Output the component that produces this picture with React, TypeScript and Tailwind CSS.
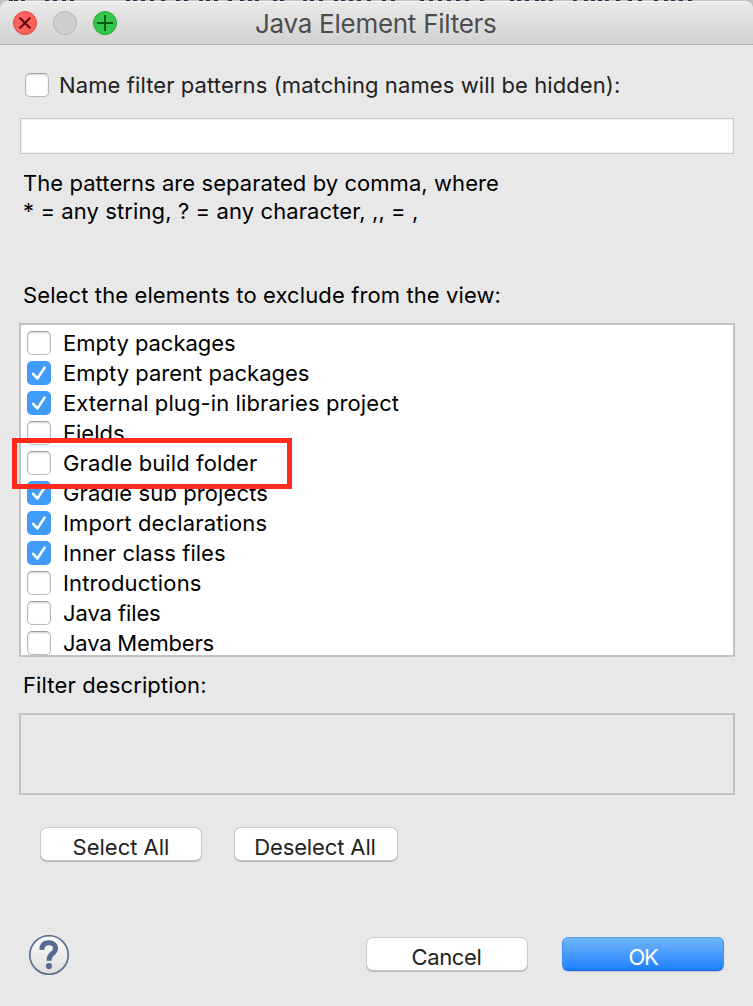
const strip = [9, 14, 21, 45, 53, 62, 70, 126, 133, 141, 150, 161, 176, 184, 199, 206, 214, 228, 240, 248, 255, 273, 280, 303, 310, 319, 334, 341, 349, 357, 367, 382, 391, 420, 429, 438, 447, 456, 465, 480, 510, 517, 525, 535, 541, 549, 573, 584, 591, 598, 605, 616, 628, 638, 654, 664, 671, 679, 688];

type Item = { label: string; checked?: boolean; tracking: string };

const items: Item[] = [
  { label: 'Empty packages', tracking: 'tracking-[-0.04px]' },
  { label: 'Empty parent packages', checked: true, tracking: 'tracking-[0.01px]' },
  { label: 'External plug-in libraries project', checked: true, tracking: 'tracking-[0.1px]' },
  { label: 'Fields', tracking: 'tracking-[0px]' },
  { label: 'Gradle build folder', tracking: 'tracking-[0.11px]' },
  { label: 'Gradle sub projects', checked: true, tracking: 'tracking-[0.1px]' },
  { label: 'Import declarations', checked: true, tracking: 'tracking-[0.15px]' },
  { label: 'Inner class files', checked: true, tracking: 'tracking-[0.03px]' },
  { label: 'Introductions', tracking: 'tracking-[0.15px]' },
  { label: 'Java files', tracking: 'tracking-[-0.1px]' },
  { label: 'Java Members', tracking: 'tracking-[-0.22px]' },
];

function Checkbox({ checked = false }: { checked?: boolean }) {
  if (!checked) {
    return (
      <span
        role="checkbox"
        aria-checked="false"
        className="block size-6 shrink-0 rounded-[5px] border border-[#b9b9b9] border-t-[#a0a0a0] bg-white shadow-[inset_0_1px_2px_#d4d4d4]"
      />
    );
  }
  return (
    <span role="checkbox" aria-checked="true" className="block size-6 shrink-0 rounded-[5px] bg-[#419bf9]">
      <svg viewBox="0 0 24 24" className="size-6" fill="none" stroke="#fff" strokeWidth="2.6" strokeLinecap="round" strokeLinejoin="round">
        <path d="M6.2 12.8 L10.4 17.5 L17.6 6.6" />
      </svg>
    </span>
  );
}

function TitleBar() {
  return (
    <header className="flex h-11 items-center rounded-t-[8px] border-t border-b border-t-[#f6f4f5] border-b-[#b1b1b1] bg-linear-to-b from-[#ebe9ea] to-[#d2d2d2] pl-[13px]">
      <div className="flex items-center gap-4">
        <svg viewBox="0 0 24 24" className="size-6">
          <circle cx="12" cy="12" r="11.5" fill="#fc605b" stroke="#e14942" />
          <path d="M6.7 6.7 L17.3 17.3 M17.3 6.7 L6.7 17.3" stroke="#5d0507" strokeWidth="2" />
        </svg>
        <svg viewBox="0 0 24 24" className="size-6">
          <circle cx="12" cy="12" r="11.5" fill="#cfcfcf" stroke="#b3b3b3" />
        </svg>
        <svg viewBox="0 0 24 24" className="size-6">
          <circle cx="12" cy="12" r="11.5" fill="#34c84a" stroke="#27a833" />
          <path d="M4 12 H20 M12 4 V20" stroke="#0a5a10" strokeWidth="2" />
        </svg>
      </div>
      <h1 className="ml-[138px] pt-px text-[26px] leading-[41px] font-normal tracking-[-0.27px] whitespace-nowrap text-[#4d4d4d]">
        Java Element Filters
      </h1>
    </header>
  );
}

function PushButton({ label, className }: { label: string; className: string }) {
  return (
    <button
      className={`h-8 rounded-[6px] bg-white pt-[6px] text-[22px] leading-[26px] whitespace-nowrap text-[#222] shadow-[0_0_0_1px_#c9c9c9,0_1px_0_1px_#b4b4b4] ${className}`}
    >
      {label}
    </button>
  );
}

export default function App() {
  return (
    <div className="flex h-[1006px] w-[753px] flex-col overflow-hidden bg-[#c3c1c4] font-['Inter',sans-serif] text-[22px] text-black">
      <div className="h-px shrink-0">
        <svg width="753" height="1" className="block">
          {strip.map((x) => (
            <rect key={x} x={x} y="0" width="4" height="1" fill="#25344d" />
          ))}
        </svg>
      </div>
      <TitleBar />
      <main className="flex-1 bg-[#e8e8e8]">
        <div className="flex h-[73px] items-center pt-[7px] pl-[25px]">
          <Checkbox />
          <span className="ml-[10px] leading-7 tracking-[0.1px] whitespace-nowrap text-[#222]">
            Name filter patterns (matching names will be hidden):
          </span>
        </div>
        <input
          aria-label="Name filter patterns"
          className="ml-5 block h-9 w-[714px] border border-[#c8c8c8] bg-white shadow-[inset_0_0_0_1px_#f1f1f1] outline-none"
        />
        <p className="mt-[15px] ml-[23px] leading-7 whitespace-nowrap">
          <span className="tracking-[0.06px]">The patterns are separated by comma, where</span>
          <br />
          <span className="tracking-[0.1px]">* = any string, ? = any character, ,, = ,</span>
        </p>
        <p className="mt-14 ml-[23px] leading-7 tracking-[0.11px] whitespace-nowrap">
          Select the elements to exclude from the view:
        </p>
        <div className="relative mt-[14px] ml-[19px] w-[716px]">
          <ul className="h-[334px] overflow-hidden border-2 border-[#c3c3c3] bg-white pt-[3px] pl-[6px]">
            {items.map((item) => (
              <li key={item.label} className="flex h-[30px] items-center">
                <Checkbox checked={item.checked} />
                <span className={`ml-3 leading-7 whitespace-nowrap ${item.tracking}`}>{item.label}</span>
              </li>
            ))}
          </ul>
          <div className="pointer-events-none absolute top-[115px] left-[-7px] h-[51px] w-[280px] border-5 border-[#fc2b1e]" />
        </div>
        <p className="mt-[14px] ml-[23px] leading-7 tracking-[0.13px] whitespace-nowrap">Filter description:</p>
        <div className="mt-[14px] ml-[19px] h-[82px] w-[716px] border-2 border-[#c3c3c3]" />
        <div className="mt-[33px] ml-[41px] flex gap-[34px]">
          <PushButton label="Select All" className="w-40 tracking-[0px]" />
          <PushButton label="Deselect All" className="w-[162px] pr-[2px] tracking-[-0.12px]" />
        </div>
        <div className="mt-[74px] flex h-[42px] items-center pr-[29px] pl-[29px]">
          <svg viewBox="0 0 40 40" className="size-10" fill="none">
            <defs>
              <linearGradient id="help" x1="0" y1="0" x2="0" y2="1">
                <stop offset="0" stopColor="#fbfbfb" />
                <stop offset="1" stopColor="#dedede" />
              </linearGradient>
            </defs>
            <circle cx="20" cy="20" r="19.2" fill="url(#help)" stroke="#566b8d" strokeWidth="1.6" />
            <path d="M12.8 14.8 C13 10.2 15.4 7.8 19.8 7.8 C24.1 7.8 26.6 10 26.6 13.3 C26.6 16.2 25 17.6 22.9 19.1 C20.8 20.7 20 22.4 20 25.8" stroke="#566b8d" strokeWidth="5" />
            <circle cx="20" cy="31.1" r="3.1" fill="#566b8d" />
          </svg>
          <div className="mb-[2px] ml-[298px] flex items-center gap-[35px]">
            <PushButton label="Cancel" className="w-40 pr-px tracking-[-0.35px]" />
            <button className="h-[34px] w-[162px] rounded-[6px] border border-t-[#5ba5ee] border-r-[#3f8ff2] border-b-[#1565f0] border-l-[#3f8ff2] bg-linear-to-b from-[#6fb5f8] to-[#1a80ff] pt-[6px] text-[22px] leading-[26px] tracking-[-1.2px] text-white shadow-[0_1px_1px_#c4c8d0]">
              OK
            </button>
          </div>
        </div>
      </main>
    </div>
  );
}
